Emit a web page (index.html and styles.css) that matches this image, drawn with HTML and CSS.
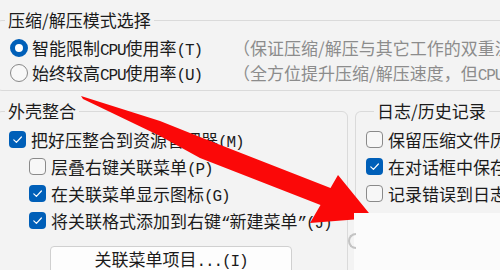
FILE: index.html
```html
<!DOCTYPE html>
<html lang="zh-CN">
<head>
<meta charset="utf-8">
<title>压缩设置</title>
<link rel="stylesheet" href="styles.css">
</head>
<body>
<div class="page">
  <fieldset class="group mode">
    <legend>压缩/解压模式选择</legend>
    <div class="opt-row">
      <span class="radio on"></span>
      <span class="lbl">智能限制<span class="m">CPU</span>使用率<span class="m">(T)</span></span>
      <span class="desc">（保证压缩/解压与其它工作的双重流畅）</span>
    </div>
    <div class="opt-row">
      <span class="radio"></span>
      <span class="lbl">始终较高<span class="m">CPU</span>使用率<span class="m">(U)</span></span>
      <span class="desc">（全方位提升压缩/解压速度，但<span class="m">CPU</span>占用较高）</span>
    </div>
  </fieldset>

  <div class="lower">
    <fieldset class="group shell">
      <legend>外壳整合</legend>
      <div class="chk-row">
        <span class="chk on"><svg viewBox="0 0 17 17"><path d="M4.8 8.9 L7.4 11.4 L12.4 6"/></svg></span>
        <span>把好压整合到资源管理器<span class="m">(M)</span></span>
      </div>
      <div class="chk-row sub">
        <span class="chk"></span>
        <span>层叠右键关联菜单<span class="m">(P)</span></span>
      </div>
      <div class="chk-row sub">
        <span class="chk on"><svg viewBox="0 0 17 17"><path d="M4.8 8.9 L7.4 11.4 L12.4 6"/></svg></span>
        <span>在关联菜单显示图标<span class="m">(G)</span></span>
      </div>
      <div class="chk-row sub">
        <span class="chk on"><svg viewBox="0 0 17 17"><path d="M4.8 8.9 L7.4 11.4 L12.4 6"/></svg></span>
        <span>将关联格式添加到右键<span class="m">“</span>新建菜单<span class="m">”(J)</span></span>
      </div>
      <div class="btn-row">
        <button class="btn">关联菜单项目<span class="m">...(I)</span></button>
      </div>
    </fieldset>

    <div class="right-col">
      <fieldset class="group log">
        <legend>日志/历史记录</legend>
        <div class="chk-row">
          <span class="chk"></span>
          <span>保留压缩文件历史记录</span>
        </div>
        <div class="chk-row">
          <span class="chk on"><svg viewBox="0 0 17 17"><path d="M4.8 8.9 L7.4 11.4 L12.4 6"/></svg></span>
          <span>在对话框中保存密码</span>
        </div>
        <div class="chk-row">
          <span class="chk"></span>
          <span>记录错误到日志文件</span>
        </div>
      </fieldset>
      <div class="panel"></div>
    </div>
  </div>

  <svg class="arrow" viewBox="0 0 500 270" width="500" height="270">
    <polygon points="81,96 160,121 200,137 330.5,188 338,175 373,218 310,223 320.5,205 200,158 160,136 83,99"/>
  </svg>
</div>
</body>
</html>
```

FILE: styles.css
```css
html, body {
  margin: 0;
  padding: 0;
}
body {
  width: 500px;
  height: 270px;
  overflow: hidden;
  background: #f3f3f3;
  font-family: "Noto Sans CJK SC", "Noto Sans", sans-serif;
  font-size: 17px;
  color: #1b1b1b;
}
.page {
  position: relative;
  width: 524px;
  margin-left: -4px;
  padding-top: 8px;
}
.m {
  font-family: "Liberation Mono", "DejaVu Sans Mono", monospace;
  font-size: 16px;
  letter-spacing: -1.1px;
}
.group {
  margin: 0;
  border: 1px solid #dadada;
  border-radius: 6px;
  min-width: 0;
}
.group legend {
  padding: 0 3px;
  margin-left: 8px;
  line-height: 22px;
  white-space: nowrap;
}
.mode {
  padding: 3px 0 5px 13px;
}
.mode legend {
  line-height: 24px;
  margin-left: -5px;
}
.opt-row {
  display: flex;
  align-items: center;
  height: 25px;
  white-space: nowrap;
}
.radio {
  flex: none;
  box-sizing: border-box;
  width: 18px;
  height: 18px;
  border-radius: 50%;
  border: 1px solid #888;
  background: #f8f8f8;
  margin-right: 4px;
}
.radio.on {
  border: 5px solid #005fb8;
  background: #fff;
}
.lbl {
  flex: none;
  width: 201px;
}
.desc {
  color: #8c8c8c;
  margin-left: 0;
}
.lower {
  display: flex;
  gap: 7px;
  margin-top: 9px;
}
.shell {
  flex: none;
  box-sizing: border-box;
  width: 352px;
  height: 400px;
  padding: 4px 0 0 12px;
}
.shell legend {
  margin-left: -4px;
}
.chk-row {
  display: flex;
  align-items: center;
  height: 27px;
  white-space: nowrap;
}
.chk-row.sub {
  padding-left: 20px;
}
.chk {
  flex: none;
  box-sizing: border-box;
  width: 17px;
  height: 17px;
  border-radius: 4px;
  border: 1px solid #8a8a8a;
  background: #f7f7f7;
  margin-right: 5px;
}
.chk.on {
  border: none;
  background: #005fb8;
}
.chk svg {
  display: block;
  width: 17px;
  height: 17px;
}
.chk svg path {
  fill: none;
  stroke: #fff;
  stroke-width: 1.2;
  stroke-linecap: round;
  stroke-linejoin: round;
}
.btn-row {
  margin-top: 12px;
  padding-left: 41px;
}
.btn {
  display: block;
  width: 242px;
  height: 28px;
  padding: 0;
  border: 1px solid #d0d0d0;
  border-radius: 4px;
  background: #fdfdfd;
  font: inherit;
  color: #1b1b1b;
  line-height: 24px;
}
.right-col {
  flex: 1;
  display: flex;
  flex-direction: column;
  min-width: 0;
}
.log {
  border-bottom: none;
  border-radius: 6px 6px 0 0;
  padding: 4px 0 6px 10px;
  overflow: hidden;
}
.log legend {
  margin-left: 8px;
}
.panel {
  position: relative;
  z-index: 2;
  height: 80px;
  margin-left: -1px;
  background: #fbfbfb;
}
.panel::before {
  content: "";
  position: absolute;
  left: -6px;
  top: 20px;
  width: 8px;
  height: 16px;
  box-sizing: border-box;
  border: 2px solid #c4c4c4;
  border-right: none;
  border-radius: 8px 0 0 8px;
}
.arrow {
  position: absolute;
  left: 4px;
  top: 0;
  z-index: 1;
  pointer-events: none;
}
.arrow polygon {
  fill: #fb0808;
}
```
